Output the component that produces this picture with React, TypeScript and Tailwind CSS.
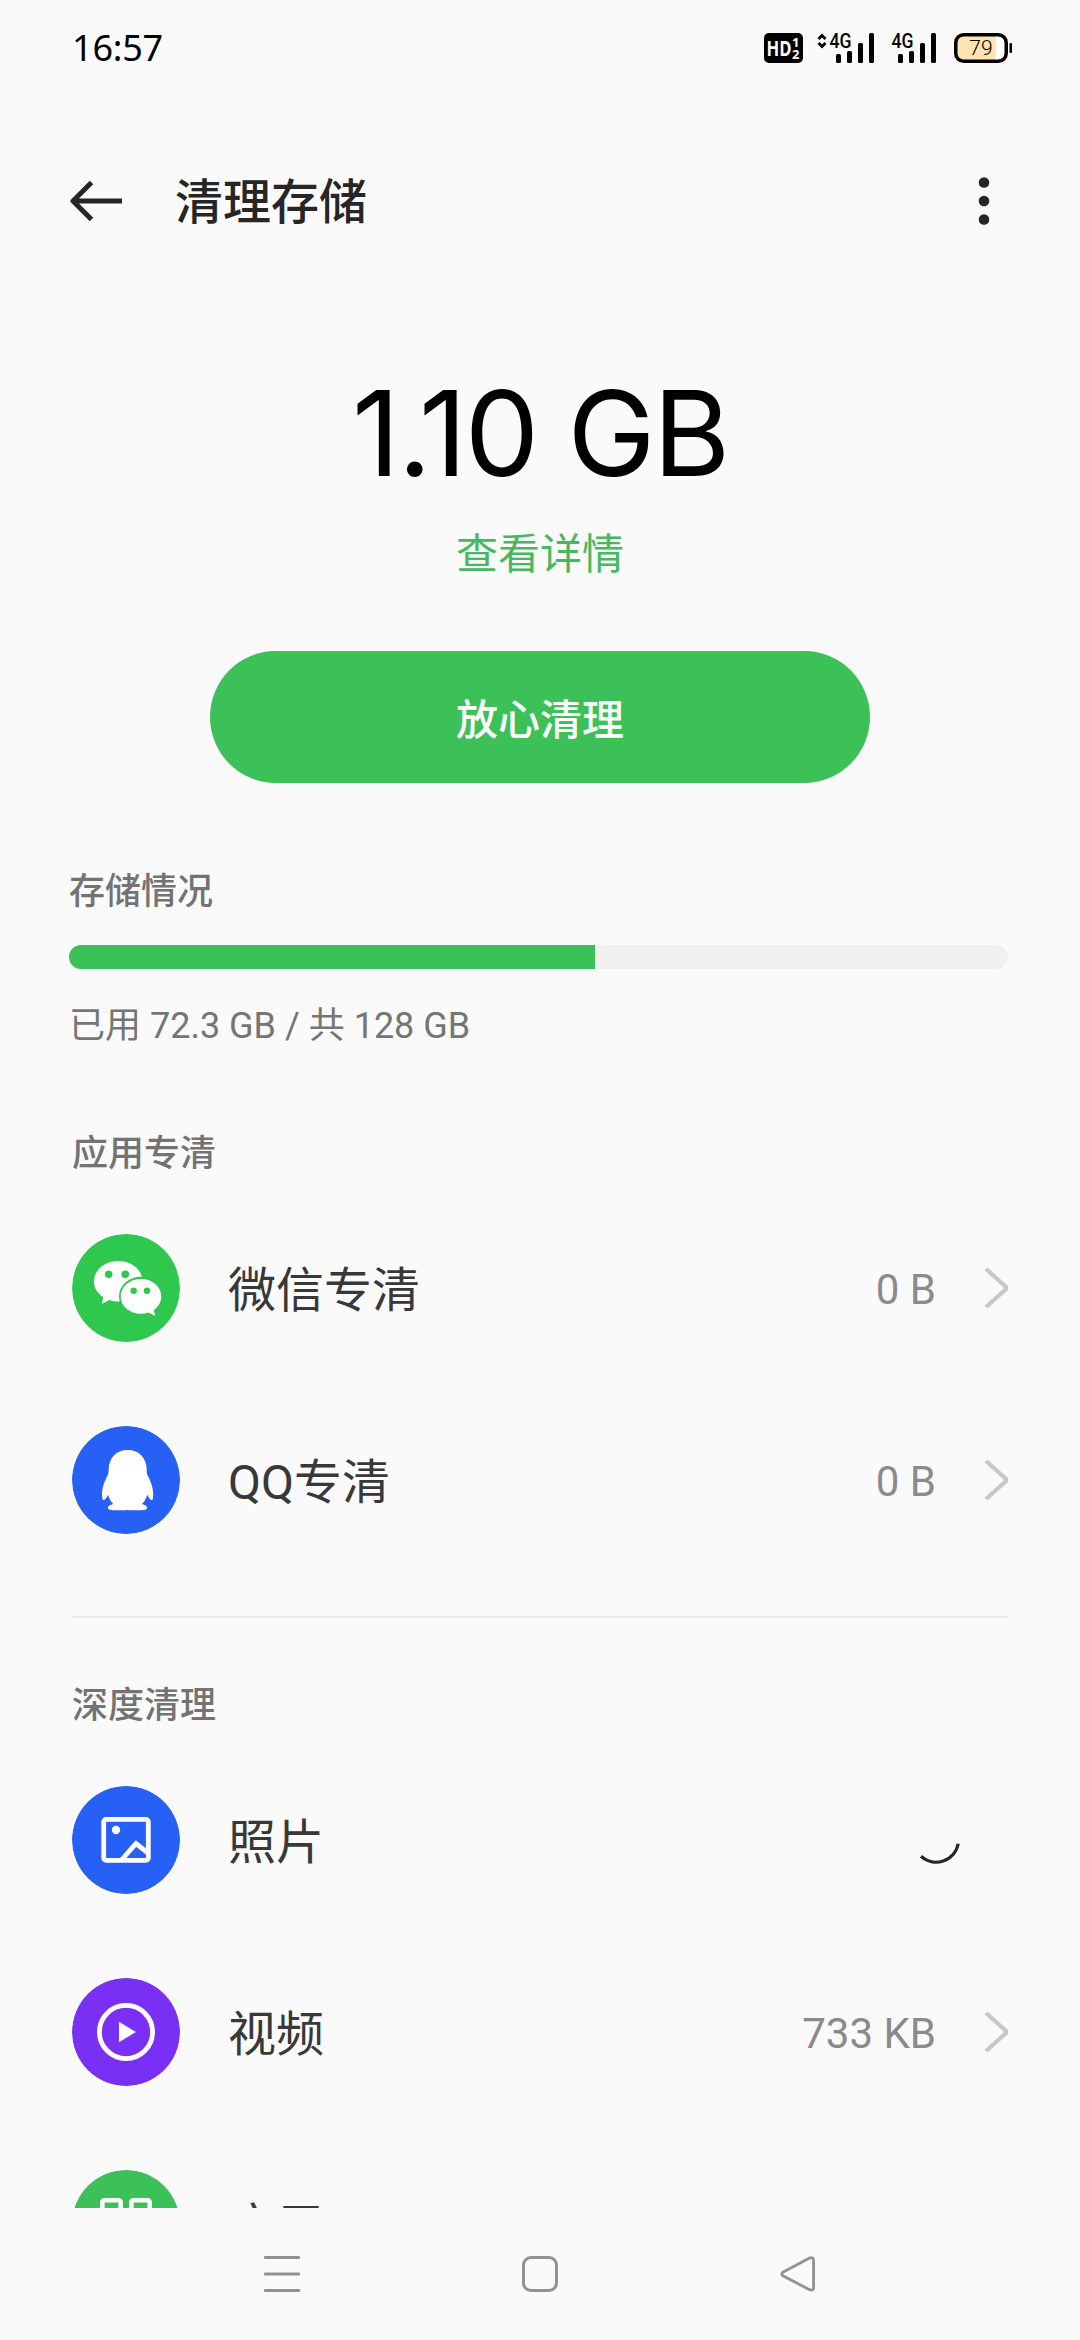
import type { ReactNode } from 'react'

type RowProps = {
  icon: ReactNode
  color: string
  label: string
  value?: string
  loading?: boolean
}

function Signal({ data }: { data?: boolean }) {
  return (
    <svg
      className={data ? 'h-[34px] w-[57px]' : 'h-[34px] w-[45px]'}
      viewBox={data ? '0 -2 57 34' : '12 -2 45 34'}
      overflow="visible"
    >
      {data && (
        <path d="M1.5 6 5 2.5 8.5 6M1.5 10 5 13.5 8.5 10" fill="none" stroke="#000" strokeWidth="2.8" />
      )}
      <text
        x="12.5"
        y="14.5"
        fontSize="20"
        fontWeight="500"
        textLength="22"
        lengthAdjust="spacingAndGlyphs"
        fontFamily="Roboto, sans-serif"
      >
        4G
      </text>
      <rect x="19" y="21" width="5" height="9" rx="1.5" />
      <rect x="30" y="18" width="5" height="12" rx="1.5" />
      <rect x="41" y="10" width="5" height="20" rx="1.5" />
      <rect x="52" y="0" width="5" height="30" rx="1.5" />
    </svg>
  )
}

function StatusBar() {
  return (
    <div className="flex h-24 shrink-0 items-center justify-between pr-[68px] pl-[72px]">
      <span className="text-[36px] leading-none tracking-[-0.2px] text-black [font-family:'Noto_Sans',sans-serif]">16:57</span>
      <div className="flex items-center">
        <svg className="mr-[14px] h-[30px] w-[39px]" viewBox="0 0 39 30" fontWeight="700" fill="#fff">
          <rect width="39" height="30" rx="5" fill="#000" />
          <text x="2.5" y="23" fontSize="22" textLength="25" lengthAdjust="spacingAndGlyphs" fontFamily="'Open Sans', sans-serif">
            HD
          </text>
          <text x="28" y="14" fontSize="13" fontFamily="'Open Sans', sans-serif">1</text>
          <text x="28" y="25.5" fontSize="13" fontFamily="'Open Sans', sans-serif">2</text>
        </svg>
        <Signal data />
        <div className="w-[17px]" />
        <Signal />
        <svg className="ml-[18px] h-[30px] w-[58px]" viewBox="0 0 58 30">
          <rect x="1.75" y="1.75" width="50.5" height="26.5" rx="8" fill="#fff" />
          <path d="M42 2v26H9.5A7.5 7.5 0 0 1 2 20.5v-11A7.5 7.5 0 0 1 9.5 2z" fill="#ffe4b0" />
          <rect x="1.75" y="1.75" width="50.5" height="26.5" rx="8" fill="none" stroke="#000" strokeWidth="3.5" />
          <rect x="55.5" y="10" width="2.5" height="10" rx="1" />
          <text x="27" y="22" fontSize="21" fontWeight="300" textAnchor="middle" fontFamily="Roboto, sans-serif">
            79
          </text>
        </svg>
      </div>
    </div>
  )
}

function Header() {
  return (
    <header className="flex h-[210px] shrink-0 items-center px-[69px]">
      <svg className="h-10 w-[54px]" viewBox="0 0 54 40" fill="none" stroke="#262626" strokeWidth="5">
        <path d="M53 20H4M22.5 1.5 4 20l18.5 18.5" strokeLinejoin="round" />
      </svg>
      <h1 className="ml-[52px] flex-1 pt-[3px] text-[48px] leading-none font-medium text-[#262626]">清理存储</h1>
      <svg className="mr-[21px] h-12 w-3" viewBox="0 0 12 48" fill="#262626">
        <circle cx="6" cy="5.5" r="5.3" />
        <circle cx="6" cy="24" r="5.3" />
        <circle cx="6" cy="42.5" r="5.3" />
      </svg>
    </header>
  )
}

function Row({ icon, color, label, value, loading }: RowProps) {
  return (
    <div className="flex h-48 shrink-0 items-center px-[72px]">
      <svg className="h-[108px] w-[108px] rounded-full" viewBox="0 0 108 108" fill="#fff">
        <circle cx="54" cy="54" r="54" fill={color} />
        {icon}
      </svg>
      <span className="ml-12 flex-1 pt-1.5 text-[48px] leading-none text-[#383838]">{label}</span>
      {value && <span className="pt-1 text-[42px] leading-none text-[#8a8a8a]">{value}</span>}
      {value && (
        <svg className="ml-12 h-[42px] w-6" viewBox="0 0 24 42" fill="none" stroke="#c8c8c8" strokeWidth="4.2">
          <path d="M2 2 21.5 19.5Q23 21 21.5 22.5L2 40" />
        </svg>
      )}
      {loading && (
        <svg className="mr-12 h-12 w-12" viewBox="0 0 48 48" fill="none" stroke="#262626" strokeWidth="3.2">
          <path d="M9 40.3A22.5 22.5 0 0 0 46.2 27.8" />
        </svg>
      )}
    </div>
  )
}

function SectionTitle({ text }: { text: string }) {
  return <h2 className="pl-[72px] text-[36px] leading-[40px] font-medium text-[#737373]">{text}</h2>
}

const wechatIcon = (
  <>
    <path d="M46.3 27C32.5 27 22 36 22 47.4c0 6.7 3.6 12 9.2 15.6L30 69.7l7.5-3.8c3 1 5.8 1.6 9 1.6 13.5 0 24-9 24-20.2S59.8 27 46.3 27z" />
    <ellipse cx="69" cy="62.3" rx="22" ry="19.5" fill="#2dc84d" />
    <path d="M69 45c-11.5 0-20.3 7.8-20.3 17.4S57.5 79.7 69 79.7c2.6 0 5-.4 7.4-1.2l6.900 3.600-1.500-6.200c4.700-3.400 7.500-8.200 7.500-13.500C89.300 52.800 80.500 45 69 45z" />
    <g fill="#2dc84d">
      <circle cx="36.7" cy="40.3" r="3.8" />
      <circle cx="53.3" cy="40.3" r="3.8" />
      <circle cx="61.7" cy="56.7" r="3.2" />
      <circle cx="75" cy="56.7" r="3.2" />
    </g>
  </>
)

const qqIcon = (
  <path d="M55.7 24C44 24 37 32 36.7 43c0 2-.2 4-.7 5.500-3.500 6.500-6 13-6 19.500 0 3 .4 5.300 1.200 6 1.200.6 3.500-2.500 5-5.300.8 3.600 2.500 6.800 5 9.300-3 .7-5.200 2-5.200 3.800 0 2 2.500 2.500 9 2.500 4.500 0 8.500-.1 10.700-.3 2.200.2 6.200.3 10.500.3 6.300 0 8.800-.5 8.800-2.500 0-1.800-2-3.100-5-3.800 2.500-2.500 4.300-5.700 5.200-9.300 1.500 2.800 3.700 5.900 5 5.300.7-.7 1-3 1-6 0-6.500-2.500-13-6-19.500-.4-1.500-.5-3.500-.5-5.500C74.400 32 67.400 24 55.700 24z" />
)

const photoIcon = (
  <>
    <g fill="none" stroke="#fff" strokeWidth="4.8">
      <rect x="31.7" y="33.4" width="44.6" height="41" rx="2.5" />
      <path d="M49.5 74 64 57.5 76 67" />
    </g>
    <circle cx="44" cy="44" r="4.2" />
  </>
)

const videoIcon = (
  <>
    <circle cx="54" cy="54" r="26.6" fill="none" stroke="#fff" strokeWidth="4.8" />
    <path d="M47 43.7v20.6L64 54z" />
  </>
)

const appsIcon = (
  <g fill="none" stroke="#fff" strokeWidth="4.6">
    <rect x="30.3" y="30.3" width="18.4" height="18.4" rx="2" />
    <rect x="59.3" y="30.3" width="18.4" height="18.4" rx="2" />
    <rect x="30.3" y="59.3" width="18.4" height="18.4" rx="2" />
    <rect x="59.3" y="59.3" width="18.4" height="18.4" rx="2" />
  </g>
)

function NavBar() {
  return (
    <nav className="flex h-[132px] shrink-0 items-center justify-between px-[264px]">
      <svg className="h-9 w-9" viewBox="0 0 36 36" fill="#929292">
        <rect y="0" width="36" height="3" rx="1" />
        <rect y="16.5" width="36" height="3" rx="1" />
        <rect y="33" width="36" height="3" rx="1" />
      </svg>
      <div className="h-9 w-9 rounded-[9px] border-[3px] border-[#929292]" />
      <svg className="h-9 w-9" viewBox="0 0 36 36" fill="none" stroke="#929292" strokeWidth="2.8">
        <path d="M2.9 16.2 29.5 2.1Q33.6 .8 33.6 4.5v27Q33.6 35 29.5 33.7L2.9 19.8Q.6 18 2.9 16.2z" />
      </svg>
    </nav>
  )
}

export default function App() {
  const used = 526
  const total = 939

  return (
    <div className="flex h-[2340px] w-[1080px] flex-col overflow-hidden bg-[#fafafa] [font-family:Roboto,'Noto_Sans_CJK_SC',sans-serif]">
      <StatusBar />
      <main className="flex min-h-0 flex-1 flex-col overflow-hidden">
        <Header />
        <section className="flex shrink-0 flex-col items-center pt-[67px]">
          <div className="text-[118px] leading-[120px] font-[375] tracking-[-2.4px] text-black [font-family:Inter,sans-serif]">
            1.10 GB
          </div>
          <a className="mt-[41px] text-[42px] leading-[42px] text-[#48b85f]">查看详情</a>
          <button className="mt-[75px] h-[132px] w-[660px] rounded-full bg-[#3cc058] pt-1.5 text-[42px] font-medium text-white">
            放心清理
          </button>
        </section>

        <section className="mt-[89px] shrink-0 pr-[72px] pl-[69px]">
          <h2 className="text-[36px] leading-[40px] font-medium text-[#737373]">存储情况</h2>
          <div className="mt-[33px] h-6 overflow-hidden rounded-full bg-[#f0f0f0]">
            <div className="h-full bg-[#3cc058]" style={{ width: `${(used / total) * 100}%` }} />
          </div>
          <p className="mt-[37px] text-[36px] leading-[40px] text-[#757575]">已用 72.3 GB / 共 128 GB</p>
        </section>

        <section className="mt-[88px] shrink-0">
          <SectionTitle text="应用专清" />
          <div className="mt-[18px]">
            <Row icon={wechatIcon} color="#2dc84d" label="微信专清" value="0 B" />
            <Row icon={qqIcon} color="#2660f5" label="QQ专清" value="0 B" />
          </div>
        </section>

        <hr className="mx-[72px] mt-10 shrink-0 border-t-2 border-[#ebebeb]" />

        <section className="mt-[68px] shrink-0">
          <SectionTitle text="深度清理" />
          <div className="mt-[18px]">
            <Row icon={photoIcon} color="#2660f5" label="照片" loading />
            <Row icon={videoIcon} color="#7a2ff5" label="视频" value="733 KB" />
            <Row icon={appsIcon} color="#3cc058" label="应用" />
          </div>
        </section>
      </main>
      <NavBar />
    </div>
  )
}
